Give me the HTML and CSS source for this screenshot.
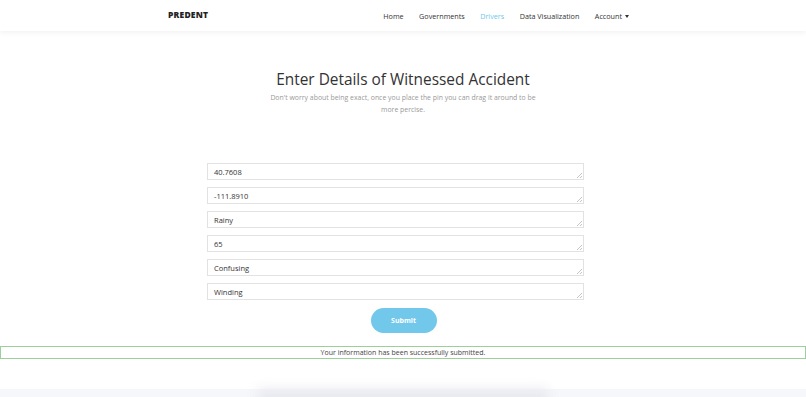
FILE: index.html
```html
<!DOCTYPE html>
<html lang="en">
<head>
    <meta charset="UTF-8">
    <title>Predent - Drivers</title>
    <link rel="stylesheet" href="styles.css">
</head>
<body>
<nav class="navbar">
    <div class="container nav-inner">
        <a class="brand" href="#">PREDENT</a>
        <ul class="nav-links">
            <li><a href="#">Home</a></li>
            <li><a href="#">Governments</a></li>
            <li><a href="#" class="active">Drivers</a></li>
            <li><a href="#">Data Visualization</a></li>
            <li><a href="#" class="dropdown">Account</a></li>
        </ul>
    </div>
</nav>

<section class="intro">
    <h1>Enter Details of Witnessed Accident</h1>
    <p>Don't worry about being exact, once you place the pin you can drag it around to be more percise.</p>
</section>

<form class="report-form" id="form">
    <textarea name="lat" rows="1">40.7608</textarea>
    <textarea name="lng" rows="1">-111.8910</textarea>
    <textarea name="weather" rows="1">Rainy</textarea>
    <textarea name="speed" rows="1">65</textarea>
    <textarea name="signage" rows="1">Confusing</textarea>
    <textarea name="road" rows="1">Winding</textarea>
    <div class="actions">
        <button type="submit">Submit</button>
    </div>
</form>

<div class="alert-success">Your information has been successfully submitted.</div>

<div class="footer-band">
    <div class="footer-shadow"></div>
</div>
</body>
</html>
```

FILE: styles.css
```css
* {
    box-sizing: border-box;
}

body {
    margin: 0;
    font-family: "Open Sans", "DejaVu Sans", sans-serif;
    color: #333;
    background: #fff;
    overflow: hidden;
}

a {
    text-decoration: none;
}

.container {
    width: 470px;
    margin: 0 auto;
}

.navbar {
    height: 31px;
    background: #fff;
    box-shadow: 0 2px 5px rgba(0, 0, 0, 0.05);
}

.nav-inner {
    height: 100%;
    display: flex;
    align-items: center;
    justify-content: space-between;
    padding-bottom: 2px;
}

.brand {
    font-size: 8.5px;
    line-height: 10px;
    font-weight: 800;
    color: #222;
    letter-spacing: 0.2px;
}

.nav-links {
    display: flex;
    list-style: none;
    margin: 0 9px 0 0;
    padding: 0;
    gap: 15.5px;
    line-height: 10px;
}

.nav-links a {
    font-size: 7.2px;
    color: #333;
}

.nav-links a.active {
    color: #70c8ea;
}

.nav-links a.dropdown::after {
    content: "";
    display: inline-block;
    margin-left: 3px;
    vertical-align: 1px;
    border-top: 3px solid #333;
    border-left: 2.5px solid transparent;
    border-right: 2.5px solid transparent;
}

.intro {
    text-align: center;
    padding-top: 38px;
}

.intro h1 {
    margin: 0;
    font-size: 15.4px;
    font-weight: 400;
    color: #333;
}

.intro p {
    width: 270px;
    margin: 2px auto 0;
    font-size: 6.9px;
    line-height: 12px;
    color: #999;
}

.report-form {
    width: 377px;
    margin: 47px 0 0 calc(50% - 196px);
    display: flex;
    flex-direction: column;
    gap: 7px;
}

.report-form textarea {
    display: block;
    width: 100%;
    height: 17px;
    padding: 3px 6px;
    font-family: inherit;
    font-size: 7.5px;
    line-height: 10px;
    color: #333;
    border: 1px solid #e2e2e2;
    border-radius: 0;
    resize: none;
    overflow: hidden;
    background: #fff url("data:image/svg+xml,%3Csvg xmlns='http://www.w3.org/2000/svg' width='5' height='5'%3E%3Cpath d='M5 0L0 5M5 3L3 5' stroke='%23c4c4c4' stroke-width='1'/%3E%3C/svg%3E") no-repeat right 1px bottom 1px;
}

.actions {
    display: flex;
    justify-content: center;
    margin-top: 1px;
    margin-left: 16px;
}

.actions button {
    width: 66px;
    height: 25px;
    border: none;
    border-radius: 13px;
    background: #72c8eb;
    color: #fff;
    font-family: inherit;
    font-size: 7px;
    font-weight: 700;
}

.alert-success {
    margin-top: 13px;
    height: 13px;
    border: 1px solid #9ccf9c;
    text-align: center;
    font-size: 7px;
    line-height: 11px;
    color: #444;
}

.footer-band {
    margin-top: 30px;
    height: 20px;
    background: #f6f7fb;
    display: flex;
    justify-content: center;
}

.footer-shadow {
    width: 290px;
    height: 20px;
    background: #e8e9ef;
    filter: blur(6px);
}
```
